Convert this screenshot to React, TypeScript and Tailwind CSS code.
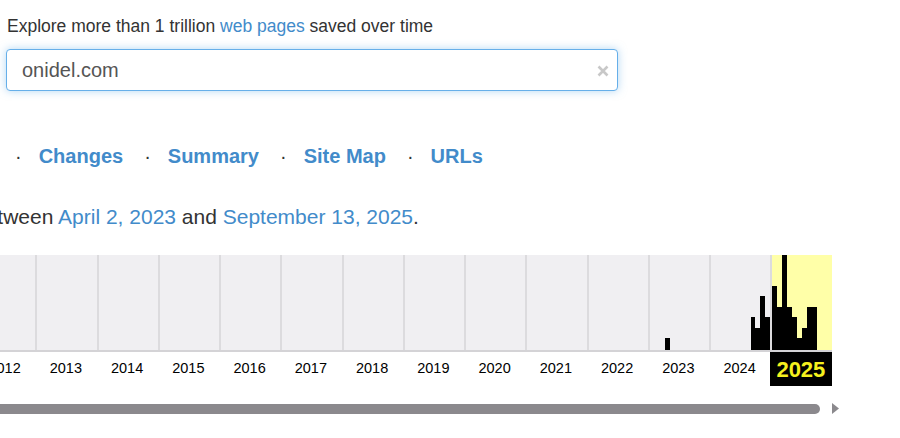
import React from 'react';

const YEARS = [2012, 2013, 2014, 2015, 2016, 2017, 2018, 2019, 2020, 2021, 2022, 2023, 2024, 2025];
const CURRENT_YEAR = 2025;

// capture counts per month, drawn as bar heights in px (max 95)
const captures: Record<number, number[]> = {
  2023: [0, 0, 0, 12, 0, 0, 0, 0, 0, 0, 0, 0],
  2024: [0, 0, 0, 0, 0, 0, 0, 0, 33, 22, 54, 33],
  2025: [64, 43, 95, 43, 33, 12, 22, 43, 43, 0, 0, 0],
};

const NAV = ['Changes', 'Summary', 'Site Map', 'URLs'];

function YearColumn({ year }: { year: number }) {
  const months = captures[year] ?? new Array(12).fill(0);
  const active = year === CURRENT_YEAR;
  return (
    <div
      className={`flex items-end w-[61.25px] h-full shrink-0 border-l-2 border-[#dcdbde] ${
        active ? 'bg-[#ffffa8]' : ''
      }`}
    >
      {months.map((h, i) => (
        <div key={i} className="flex-1 flex items-end h-full">
          {h > 0 && <div className="w-full bg-black" style={{ height: h }} />}
        </div>
      ))}
    </div>
  );
}

export default function App() {
  return (
    <div className="w-[900px] h-[438px] overflow-hidden bg-white text-[#333] font-['Liberation_Sans',Arial,sans-serif]">
      {/* Search header */}
      <div className="pl-[7px] pt-[16px] text-[17.5px] leading-[20px]">
        Explore more than 1 trillion <a className="text-[#428bca]">web pages</a> saved over time
      </div>
      <div className="ml-[6px] mt-[13px] w-[612px] h-[42px] flex items-center justify-between rounded-[4px] border border-[#66afe9] bg-white shadow-[0_0_8px_rgba(102,175,233,0.5)] pl-[15px] pr-[8px]">
        <span className="text-[20px] text-[#555]">onidel.com</span>
        <svg width="12" height="12" viewBox="0 0 12 12" className="mt-[1px]">
          <path d="M1.5 1.5 L10.5 10.5 M10.5 1.5 L1.5 10.5" stroke="#c8c8c8" strokeWidth="2.6" />
        </svg>
      </div>

      {/* Tool links */}
      <div className="mt-[53px] flex items-center text-[20px] leading-[24px] h-[24px]">
        {NAV.map((item, i) => (
          <React.Fragment key={item}>
            <span className={i === 0 ? 'ml-[15px]' : 'ml-[21px]'}>·</span>
            <a className="ml-[17px] font-bold text-[#428bca]">{item}</a>
          </React.Fragment>
        ))}
      </div>

      {/* Capture range */}
      <div className="mt-[37px] -ml-[26px] text-[21px] leading-[24px] whitespace-nowrap">
        between <a className="text-[#428bca]">April 2, 2023</a> and{' '}
        <a className="text-[#428bca]">September 13, 2025</a>.
      </div>

      {/* Sparkline */}
      <div className="mt-[26px] -ml-[26px] w-fit">
        <div className="flex h-[95px] bg-[#f0eff2]">
          {YEARS.map((y) => (
            <YearColumn key={y} year={y} />
          ))}
        </div>
        <div className="h-[2px] bg-[#d4d3d6]" />
        <div className="flex h-[34px]">
          {YEARS.map((y) =>
            y === CURRENT_YEAR ? (
              <div
                key={y}
                className="w-[61.25px] shrink-0 flex items-center justify-center bg-black text-[#f5f01e] font-bold text-[22px]"
              >
                {y}
              </div>
            ) : (
              <div key={y} className="w-[61.25px] shrink-0 flex items-center justify-center text-[14.5px] text-black">
                {y}
              </div>
            )
          )}
        </div>
      </div>

      {/* Year scroller */}
      <div className="mt-[17px] flex items-center">
        <div className="w-[820px] h-[10px] bg-[#8b898d] rounded-r-full" />
        <svg width="8" height="11" viewBox="0 0 8 11" className="ml-[12px]">
          <path d="M0 0 L7 5.5 L0 11 Z" fill="#8b898d" />
        </svg>
      </div>
    </div>
  );
}
